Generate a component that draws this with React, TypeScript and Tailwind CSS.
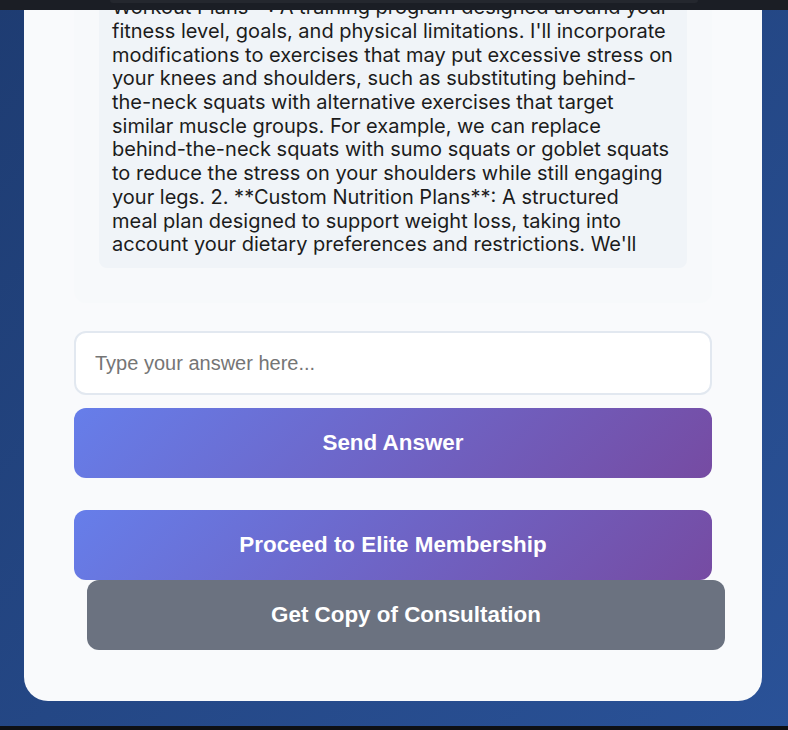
import React, { useState } from "react";

// the reply as it wraps in the chat bubble
const replyLines = [
  "Here is how I'd structure your coaching. 1. **Personalized",
  "Workout Plans**: A training program designed around your",
  "fitness level, goals, and physical limitations. I'll incorporate",
  "modifications to exercises that may put excessive stress on",
  "your knees and shoulders, such as substituting behind-",
  "the-neck squats with alternative exercises that target",
  "similar muscle groups. For example, we can replace",
  "behind-the-neck squats with sumo squats or goblet squats",
  "to reduce the stress on your shoulders while still engaging",
  "your legs. 2. **Custom Nutrition Plans**: A structured",
  "meal plan designed to support weight loss, taking into",
  "account your dietary preferences and restrictions. We'll",
];

const gradientBtn =
  "block w-full h-[70px] rounded-[12px] bg-[linear-gradient(135deg,#667eea_0%,#764ba2_100%)] text-white text-[22.4px] font-bold";

const App: React.FC = () => {
  const [answer, setAnswer] = useState("");

  return (
    <div className="relative h-[730px] overflow-hidden bg-[linear-gradient(135deg,#1e3c72_0%,#2a5298_100%)] flex flex-col justify-end pb-[29px]">
      {/* fixed header strip */}
      <div className="absolute top-0 left-0 right-0 h-[10px] bg-[#1b1e25] z-10">
        <div className="ml-[110px] w-[588px] h-[3px] rounded-b-[3px] bg-[#24272e]"></div>
      </div>

      <div
        className="ml-[24px] w-[738px] rounded-[24px] bg-[#f9fafc] px-[50px] pb-[51px] pt-[50px]"
        style={{ fontFamily: "Inter, 'Noto Sans', sans-serif" }}
      >
        <div className="rounded-[12px] bg-[#f7f9fb] px-[25px] pt-[25px] pb-[35px]">
          <div className="rounded-[8px] bg-[#f0f4f8] px-[13px] pt-[12px] pb-[11px]">
            <p className="text-[20px] leading-[23.7px] text-[#1c1c1c] whitespace-nowrap">
              {replyLines.map((line, i) => (
                <React.Fragment key={i}>
                  {line}
                  {i < replyLines.length - 1 && <br />}
                </React.Fragment>
              ))}
            </p>
          </div>
        </div>

        <input
          value={answer}
          onChange={(e) => setAnswer(e.target.value)}
          placeholder="Type your answer here..."
          className="mt-[28px] block w-full h-[64px] rounded-[12px] border-2 border-[#e2e8f0] bg-white px-[19px] text-[20px] text-[#222] placeholder:text-[#757575] outline-none"
          style={{ fontFamily: "'Liberation Sans', Arial, sans-serif" }}
        />

        <div style={{ fontFamily: "'Liberation Sans', Arial, sans-serif" }}>
          <button className={"mt-[13px] " + gradientBtn}>Send Answer</button>

          <button className={"mt-[32px] " + gradientBtn}>
            Proceed to Elite Membership
          </button>
          <button className="ml-[13px] block w-[638px] h-[70px] rounded-[12px] bg-[#6b7280] text-white text-[22.4px] font-bold">
            Get Copy of Consultation
          </button>
        </div>
      </div>

      <div className="absolute bottom-0 left-0 right-0 h-[4px] bg-[#0e1014]"></div>
    </div>
  );
};

export default App;
